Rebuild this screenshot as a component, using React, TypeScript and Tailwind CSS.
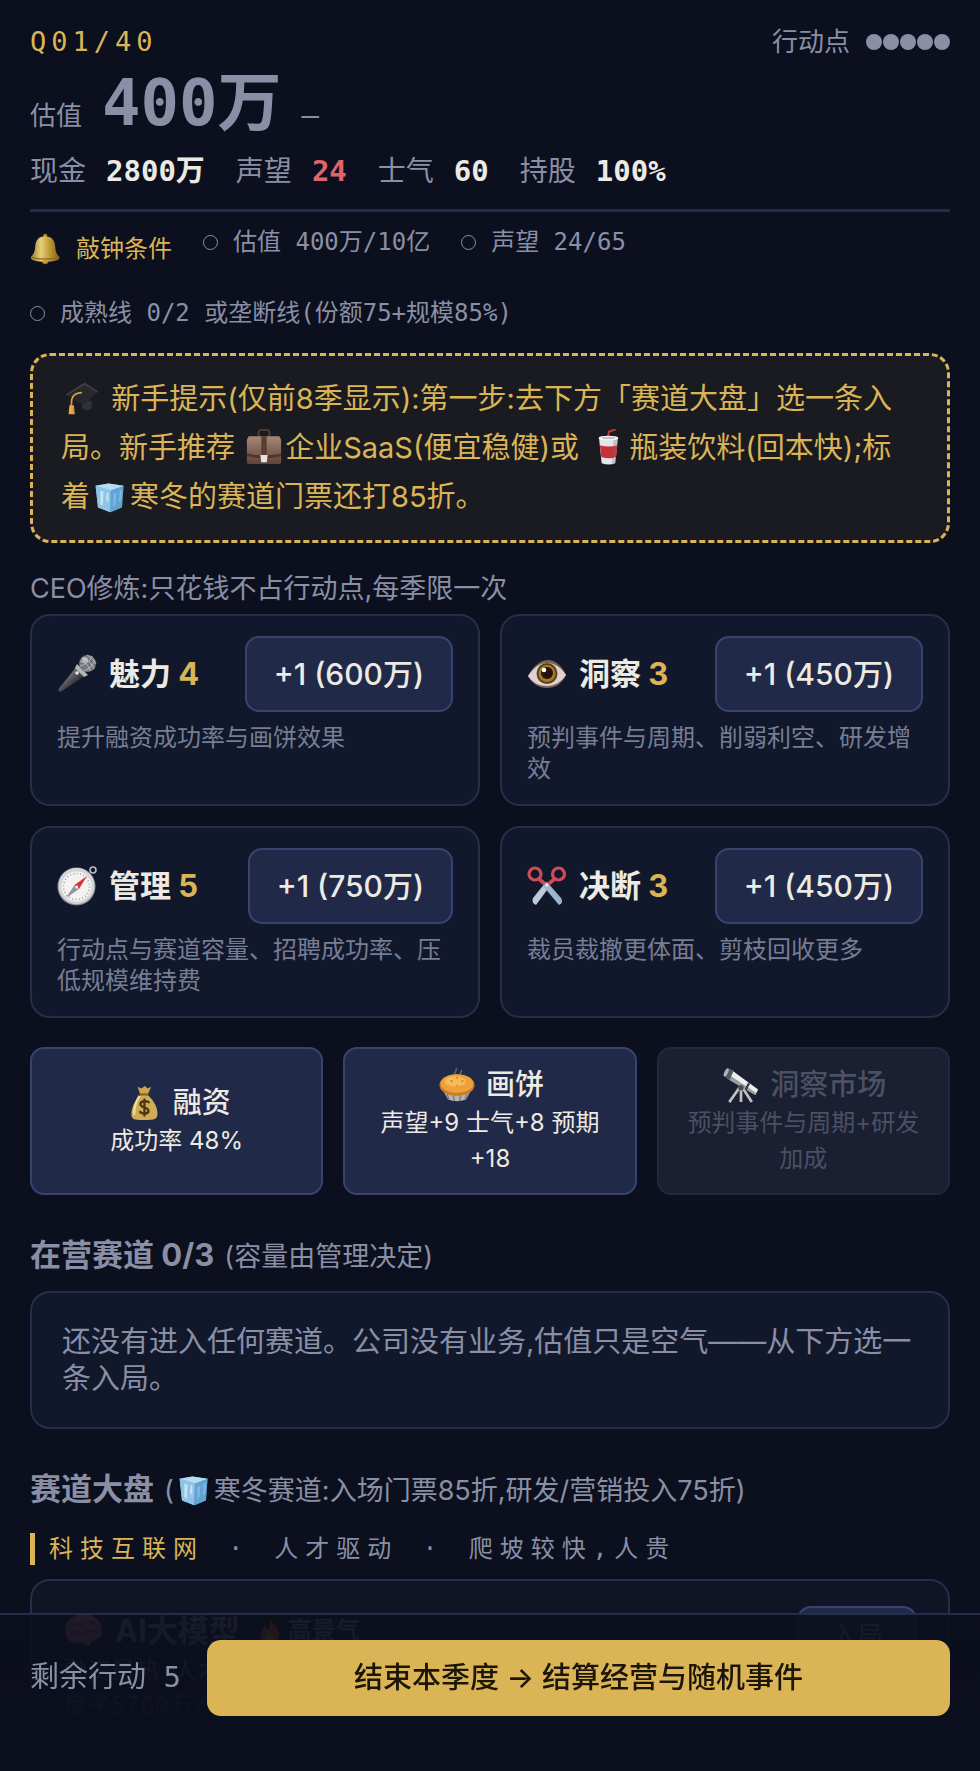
import type { ReactNode } from 'react';

const MONO = "font-['DejaVu_Sans_Mono','Noto_Sans_CJK_SC',monospace]";
const SANS = "font-['Inter','Noto_Sans_CJK_SC',sans-serif]";

function Glyph({ size, children }: { size: string; children: ReactNode }) {
  return (
    <svg viewBox="0 0 40 40" aria-hidden="true" className={`inline-block shrink-0 ${size}`}>
      {children}
    </svg>
  );
}

const SM = 'size-8';
const MD = 'mx-[3px] size-9 align-[-7px]';
const ICE = 'mx-1 size-8 align-[-6px]';
const LG = 'size-10';

function Bell() {
  return (
    <Glyph size={SM}>
      <defs>
        <linearGradient id="bell" x1="0" x2="1">
          <stop offset="0" stopColor="#9c7b26" />
          <stop offset=".35" stopColor="#e6cf78" />
          <stop offset=".7" stopColor="#b8912f" />
          <stop offset="1" stopColor="#7a5c1a" />
        </linearGradient>
      </defs>
      <circle cx="19" cy="3.5" r="2.6" fill="#b08b32" />
      <circle cx="19" cy="35" r="4" fill="#9a7024" />
      <path d="M19 4c-8 0-12 5-12.500 13C6 25 4 27 1 30c-1 4 8 6 18 6s19-2 18-6c-3-3-5-5-5.500-13C31 9 27 4 19 4z" fill="url(#bell)" />
      <path d="M2 30c5 3.500 29 3.500 34 0" stroke="#8a6820" strokeWidth="1.500" fill="none" />
      <circle cx="19" cy="35.500" r="2.400" fill="#d9933f" />
    </Glyph>
  );
}

function GradCap() {
  return (
    <Glyph size={MD}>
      <path d="M20 20l11 4v7c-3 3-8 3-11 0z" fill="#303136" />
      <path d="M2 16L23 3l15 10-17 15z" fill="#27282c" />
      <path d="M2 16L23 3l15 10-1 1L23 5 3 17z" fill="#45474c" />
      <path d="M20 14c-6 0-11 3-11.500 8L8 31" stroke="#d99a3b" strokeWidth="2" fill="none" />
      <path d="M6 28h5l1 10H5z" fill="#e39a35" />
      <path d="M7.500 29v8" stroke="#f4c46c" strokeWidth="1" />
    </Glyph>
  );
}

function Briefcase() {
  return (
    <Glyph size={MD}>
      <defs>
        <linearGradient id="case" x1="0" x2="0" y1="0" y2="1">
          <stop offset="0" stopColor="#a58877" />
          <stop offset="1" stopColor="#5f4437" />
        </linearGradient>
      </defs>
      <path d="M14 9V4q0-3 3-3h6q3 0 3 3v5" stroke="#4a3a33" strokeWidth="2.400" fill="none" />
      <path d="M3 8h34l2 4v25q0 2-2 2H3q-2 0-2-2V12z" fill="url(#case)" />
      <path d="M1 27c8 3 30 3 38 0v3c-8 3-30 3-38 0z" fill="#4f372c" />
      <path d="M17 8h6v21h-6z" fill="#5a4033" />
      <path d="M16 29h8l-1 8h-6z" fill="#e4e4e6" />
    </Glyph>
  );
}

function Cup() {
  return (
    <Glyph size={MD}>
      <path d="M20 10l1-7 8-3" stroke="#c8323a" strokeWidth="2.200" fill="none" />
      <path d="M10 10h21l-3 28q-7 3-15 0z" fill="#e6e6e8" />
      <path d="M11 18q10 3 19.500 0l-1.400 13q-8 3-16.500 0z" fill="#c92f39" />
      <path d="M26 11h5l-3 27-4 1z" fill="#7b6d77" opacity=".3" />
      <ellipse cx="20.500" cy="10" rx="11" ry="2.600" fill="#fafafa" />
      <ellipse cx="20.500" cy="10" rx="8" ry="1.400" fill="#c3c5cb" />
    </Glyph>
  );
}

function Ice() {
  return (
    <Glyph size={ICE}>
      <path d="M2 6l16-3 19 3-2 27-14 6-16-6z" fill="#72b3e0" />
      <path d="M2 6l16-3 19 3-16 6z" fill="#b5dcf0" />
      <path d="M2 6l19 6-1 27-15-6z" fill="#8fc4e4" />
      <path d="M8 12l4 1-1 18-3-2zM16 14l2 .5v12l-3-3z" fill="#c6e5f4" />
      <path d="M24 16l4-1-1 13-3 5zM32 12l3-1-1 13-3 3z" fill="#a3d0ec" />
      <path d="M21 12l16-6-2 27-15 6z" fill="#3d7fb4" opacity=".3" />
    </Glyph>
  );
}

function Mic() {
  return (
    <Glyph size={LG}>
      <defs>
        <linearGradient id="mic" x1="0" y1="0" x2="1" y2="1">
          <stop offset=".2" stopColor="#8d8e92" />
          <stop offset=".7" stopColor="#26272b" />
        </linearGradient>
      </defs>
      <path d="M20 12l9 9L5 37q-4 2-3.500-2z" fill="url(#mic)" />
      <path d="M20 10l11 11-4 2-9-9z" fill="#b5b6ba" />
      <circle cx="30.500" cy="9.500" r="8.500" fill="#77787d" />
      <path d="M23 7c5 1 10 6 10 10M25 4c6 2 10 6 12 11M30 1c4 2 7 5 9 9M23 12c4-1 11-5 12-10M27 17c5-2 9-6 11-11" stroke="#b9babd" strokeWidth="1" fill="none" />
      <circle cx="28" cy="6" r="3" fill="#dedee0" opacity=".6" />
      <circle cx="20" cy="19" r="1.800" fill="#e4e5e8" />
    </Glyph>
  );
}

function Eye() {
  return (
    <Glyph size={LG}>
      <path d="M1 22C7 11 14 6 21 6s14 6 18 15c-4 9-11 13-19 13S5 30 1 22z" fill="#7d625b" />
      <path d="M1 22c6-9 12-13 19-13s14 4 19 12c-5 7-11 11-19 11S6 29 1 22z" fill="#ddd2d0" />
      <circle cx="20" cy="19.500" r="10.500" fill="#5f4118" />
      <circle cx="20" cy="19.500" r="8.500" fill="#a67a29" />
      <circle cx="20" cy="19" r="6" fill="#21130d" />
      <circle cx="17" cy="16" r="2.300" fill="#fff" />
    </Glyph>
  );
}

function Compass() {
  return (
    <Glyph size={LG}>
      <circle cx="36" cy="4" r="3" stroke="#b9bcc2" strokeWidth="1.600" fill="none" />
      <circle cx="19.500" cy="20.500" r="19" fill="#8f9298" />
      <circle cx="19.500" cy="20" r="18" fill="#d5d6d8" />
      <circle cx="19.500" cy="20.500" r="15" fill="#f4f3f1" />
      <circle cx="19.500" cy="20.500" r="13" fill="none" stroke="#9da1a8" strokeWidth="1.600" strokeDasharray="1 2.400" />
      <path d="M30 10L22 23l-4.500-4z" fill="#d8343b" />
      <path d="M9 32l8.500-13 4.500 4z" fill="#8f949d" />
      <circle cx="19.700" cy="21" r="1.500" fill="#fff" />
    </Glyph>
  );
}

function ScissorsIcon() {
  return (
    <Glyph size={LG}>
      <path d="M19 16l4 4L9 39q-5-2-3-7z" fill="#b9cbdd" />
      <path d="M20 16l-4 4 16 19q5-2 2-7z" fill="#9db6cf" />
      <circle cx="8" cy="8" r="6" fill="none" stroke="#cf4b55" strokeWidth="3.200" />
      <circle cx="31.500" cy="8" r="6" fill="none" stroke="#cf4b55" strokeWidth="3.200" />
      <path d="M12 13l6 5M27.500 13l-6 5" stroke="#cf4b55" strokeWidth="3.600" />
      <circle cx="19.800" cy="19" r="1.500" fill="#eef2f6" />
    </Glyph>
  );
}

function MoneyBag() {
  return (
    <Glyph size={MD}>
      <path d="M13 2l4 2 4-3 3 3 4-2-4 9h-8z" fill="#cda452" />
      <path d="M16 11h8c7 6 11 14 11 21 0 6-3 7-15 7S6 38 6 32c0-7 4-15 10-21z" fill="#d0ab58" />
      <path d="M15 12c-4 6-6 14-6 21" stroke="#f4dd97" strokeWidth="2.500" fill="none" />
      <path d="M15 10.500h10" stroke="#8a6424" strokeWidth="2.500" />
      <path d="M26 20c-2-3-10-3-10 1.500s9 2.500 9 7-8 4-10 0.500M20.500 15v20" stroke="#4b3510" strokeWidth="2.500" fill="none" />
    </Glyph>
  );
}

function Pie() {
  return (
    <Glyph size={MD}>
      <path d="M18 9c-3-3 3-4 1-8M24 9c-2-3 2-3 1-6" stroke="#5d6885" strokeWidth="1.600" fill="none" />
      <path d="M4 25h32l-6 11q-10 4-20 0z" fill="#b6b4b0" />
      <path d="M9 30l2 6M16 32l1 6M24 32l-1 6M31 30l-2 6" stroke="#7a7875" strokeWidth="1.500" />
      <ellipse cx="20" cy="20" rx="19.500" ry="12" fill="#cd7a24" />
      <ellipse cx="20" cy="18.500" rx="18" ry="10.500" fill="#efa03a" />
      <ellipse cx="18" cy="16" rx="12" ry="5.500" fill="#f7ba58" />
      <path d="M20 11v2M13 15l2 1M27 15l-2 1M20 21v-1" stroke="#b4661a" strokeWidth="1.200" />
    </Glyph>
  );
}

function Telescope() {
  return (
    <Glyph size={MD}>
      <path d="M19 22L7 39M20 22v17M21 22l11 17" stroke="#bfc0c3" strokeWidth="3" />
      <path d="M9 3l30 22-3 6L5 13z" fill="#eeeeee" />
      <path d="M5 13l31 18 1-2L7 9z" fill="#9a9ca0" />
      <path d="M5 1l7 3-5 11-6-5z" fill="#55575e" />
      <path d="M28 17l2 2-4 7-2-1z" fill="#3c3e44" />
      <ellipse cx="3.500" cy="6" rx="2" ry="5" transform="rotate(25 3.500 6)" fill="#aeb2bc" />
      <circle cx="20" cy="23" r="3" fill="#4a4c52" />
    </Glyph>
  );
}

function Brain() {
  return (
    <Glyph size={LG}>
      <path d="M2 20C2 9 11 3 21 3s18 7 18 17c0 6-4 9-10 10l-3 6-6-4C10 33 2 30 2 20z" fill="#d97f87" />
      <path d="M8 14c5-4 8 2 13-2s9 0 13 2M7 22c6-3 9 3 14 0s9-2 14 0" stroke="#9c4953" strokeWidth="2" fill="none" />
    </Glyph>
  );
}

function Flame() {
  return (
    <Glyph size="size-7">
      <path d="M20 2c3 8 13 12 13 24 0 8-6 13-13 13S7 34 7 26c0-6 4-8 5-14 3 2 4 5 4 8 4-5 5-11 4-18z" fill="#e4642b" />
      <path d="M20 20c2 5 6 6 6 11s-3 7-6 7-6-2-6-7 4-6 6-11z" fill="#f5bd4a" />
    </Glyph>
  );
}

function Stat({ label, value, tone = 'text-[#eceae2]' }: { label: string; value: string; tone?: string }) {
  return (
    <div className="flex items-baseline gap-[20px]">
      <dt>{label}</dt>
      <dd className={`text-[29px] font-bold ${tone}`}>{value}</dd>
    </div>
  );
}

function Condition({ children }: { children: ReactNode }) {
  return (
    <li className="flex items-center gap-[15px] leading-8">
      <span className="size-[15px] rounded-full border-[1px] border-[#8a8fa6]" />
      <span>{children}</span>
    </li>
  );
}

function Skill({ icon, name, level, cost, text }: { icon: ReactNode; name: string; level: number; cost: string; text: string }) {
  return (
    <article className="rounded-[20px] border-2 border-[#262e4a] bg-[#12182b] px-[25px] py-5">
      <div className="flex items-center justify-between">
        <h3 className="flex items-center gap-3 text-[31px] font-bold leading-10 text-[#eceae2]">
          {icon}
          <span>
            {name} <span className="text-[#dbb456]">{level}</span>
          </span>
        </h3>
        <button type="button" className="h-[76px] rounded-[14px] border-2 border-[#384370] bg-[#202948] px-[27px] text-[30px] font-medium text-[#eceae2]">
          +1 ({cost})
        </button>
      </div>
      <p className="mt-[10px] text-[24px] leading-[31px] text-[#777d94]">{text}</p>
    </article>
  );
}

function Action({ icon, title, text, disabled = false }: { icon: ReactNode; title: string; text: string; disabled?: boolean }) {
  return (
    <button
      type="button"
      disabled={disabled}
      className="rounded-[14px] border-2 border-[#384370] bg-[#202948] px-[22px] py-4 text-[#eceae2] disabled:border-[#22283d] disabled:bg-[#1a1f32] disabled:text-[#4b5064]"
    >
      <span className="flex items-center justify-center gap-2 text-[29px] font-medium leading-10">
        {icon}
        {title}
      </span>
      <span className="block text-[24px] leading-9">{text}</span>
    </button>
  );
}

function Heading({ title, children }: { title: string; children: ReactNode }) {
  return (
    <h2 className="flex items-baseline gap-[10px] text-[31px] font-bold leading-10">
      {title}
      <span className="text-[27px] font-normal">{children}</span>
    </h2>
  );
}

export default function App() {
  return (
    <div className={`min-h-screen overflow-hidden bg-[#0c0f1d] text-[#8a8fa6] ${SANS}`}>
      <header className={`mx-[30px] border-b-3 border-[#252c47] pb-5 pt-[27px] ${MONO}`}>
        <div className="flex items-center justify-between text-[26px] leading-[30px]">
          <span className="text-[27px] tracking-[5px] text-[#dbb456]">Q01/40</span>
          <span className="flex items-center gap-4">
            行动点
            <span className="flex gap-px">
              {[0, 1, 2, 3, 4].map((n) => (
                <span key={n} className="size-4 rounded-full bg-[#8a8fa6]" />
              ))}
            </span>
          </span>
        </div>
        <div className="mt-[10px] flex items-baseline gap-5 text-[26px] leading-[72px]">
          <span>估值</span>
          <strong className="text-[64px] font-bold">400万</strong>
          <span className="text-[29px]">—</span>
        </div>
        <dl className="mt-[2px] flex flex-wrap gap-x-[31px] text-[28px] leading-[34px]">
          <Stat label="现金" value="2800万" />
          <Stat label="声望" value="24" tone="text-[#e0656a]" />
          <Stat label="士气" value="60" />
          <Stat label="持股" value="100%" />
        </dl>
      </header>

      <main className="px-[30px]">
        <ul className={`mt-[14px] flex flex-wrap items-start gap-x-[31px] gap-y-[25px] text-[24px] ${MONO}`}>
          <li className="flex items-center gap-[14px] leading-[46px] text-[#dbb456]">
            <Bell />
            敲钟条件
          </li>
          <Condition>估值 400万/10亿</Condition>
          <Condition>声望 24/65</Condition>
          <Condition>成熟线 0/2 或垄断线(份额75+规模85%)</Condition>
        </ul>

        <p className="mt-6 rounded-[20px] border-3 border-dashed border-[#dbb456] bg-[#1a1b21] pb-[19px] pl-[28px] pr-[36px] pt-[18px] text-[29px] leading-[49px] text-[#dbb456]">
          <GradCap /> 新手提示(仅前8季显示):第一步:去下方「赛道大盘」选一条入局。新手推荐 <Briefcase />
          企业SaaS(便宜稳健)或 <Cup />
          瓶装饮料(回本快);标着
          <Ice />
          寒冬的赛道门票还打85折。
        </p>

        <p className="mt-[26px] text-[27px] leading-10">CEO修炼:只花钱不占行动点,每季限一次</p>
        <section className="mt-[5px] grid grid-cols-2 gap-5">
          <Skill icon={<Mic />} name="魅力" level={4} cost="600万" text="提升融资成功率与画饼效果" />
          <Skill icon={<Eye />} name="洞察" level={3} cost="450万" text="预判事件与周期、削弱利空、研发增效" />
          <Skill icon={<Compass />} name="管理" level={5} cost="750万" text="行动点与赛道容量、招聘成功率、压低规模维持费" />
          <Skill icon={<ScissorsIcon />} name="决断" level={3} cost="450万" text="裁员裁撤更体面、剪枝回收更多" />
        </section>

        <section className="mb-10 mt-[29px] grid grid-cols-3 gap-5">
          <Action icon={<MoneyBag />} title="融资" text="成功率 48%" />
          <Action icon={<Pie />} title="画饼" text="声望+9 士气+8 预期+18" />
          <Action icon={<Telescope />} title="洞察市场" text="预判事件与周期+研发加成" disabled />
        </section>

        <Heading title="在营赛道 0/3">(容量由管理决定)</Heading>
        <p className="mb-10 mt-[14px] rounded-[20px] border-2 border-[#262e4a] bg-[#12182b] px-[30px] py-[30px] text-[29px] leading-[37px]">
          还没有进入任何赛道。公司没有业务,估值只是空气——从下方选一条入局。
        </p>

        <Heading title="赛道大盘">
          (<Ice />
          寒冬赛道:入场门票85折,研发/营销投入75折)
        </Heading>
        <p className={`mt-[22px] whitespace-pre border-l-[5px] border-[#dbb456] pl-[14px] text-[24px] leading-8 tracking-[7px] ${MONO}`}>
          <span className="text-[#dbb456]">科技互联网</span> <span className="mx-[3px]">·</span> 人才驱动 <span className="mx-[3px]">·</span> 爬坡较快,人贵
        </p>

        <article className="mt-[14px] flex items-start justify-between rounded-[20px] border-2 border-[#262e4a] bg-[#0f1524] px-[31px] pb-5 pt-[25px]">
          <div>
            <h3 className="flex items-center gap-3 text-[31px] font-bold leading-[50px]">
              <Brain />
              AI大模型
              <span className="ml-1 flex items-center gap-1 text-[24px]">
                <Flame />
                高景气
              </span>
            </h3>
            <p className={`mb-1 text-[24px] leading-[31px] ${MONO}`}>融资最热 人才</p>
            <p className={`text-[24px] leading-[31px] ${MONO}`}>盘子5700万/</p>
            <p className={`text-[24px] leading-[31px] ${MONO}`}>望29</p>
          </div>
          <button type="button" className="w-[120px] rounded-[14px] border-2 border-[#384370] bg-[#202948] py-[6px] text-[26px] leading-[44px]">
            入局 (900 万)
          </button>
        </article>
      </main>

      <footer className="fixed inset-x-0 bottom-0 flex items-center gap-[26px] border-t-2 border-[#252d4a] bg-linear-to-b from-[#0c0f1d]/90 to-[#0c0f1d] to-80% px-[30px] pb-[55px] pt-[25px]">
        <span className={`text-[29px] ${MONO}`}>剩余行动 5</span>
        <button type="button" className="h-[76px] grow rounded-[14px] bg-[#dbb456] text-[29px] font-medium text-[#1c1608]">
          结束本季度 → 结算经营与随机事件
        </button>
      </footer>
    </div>
  );
}
